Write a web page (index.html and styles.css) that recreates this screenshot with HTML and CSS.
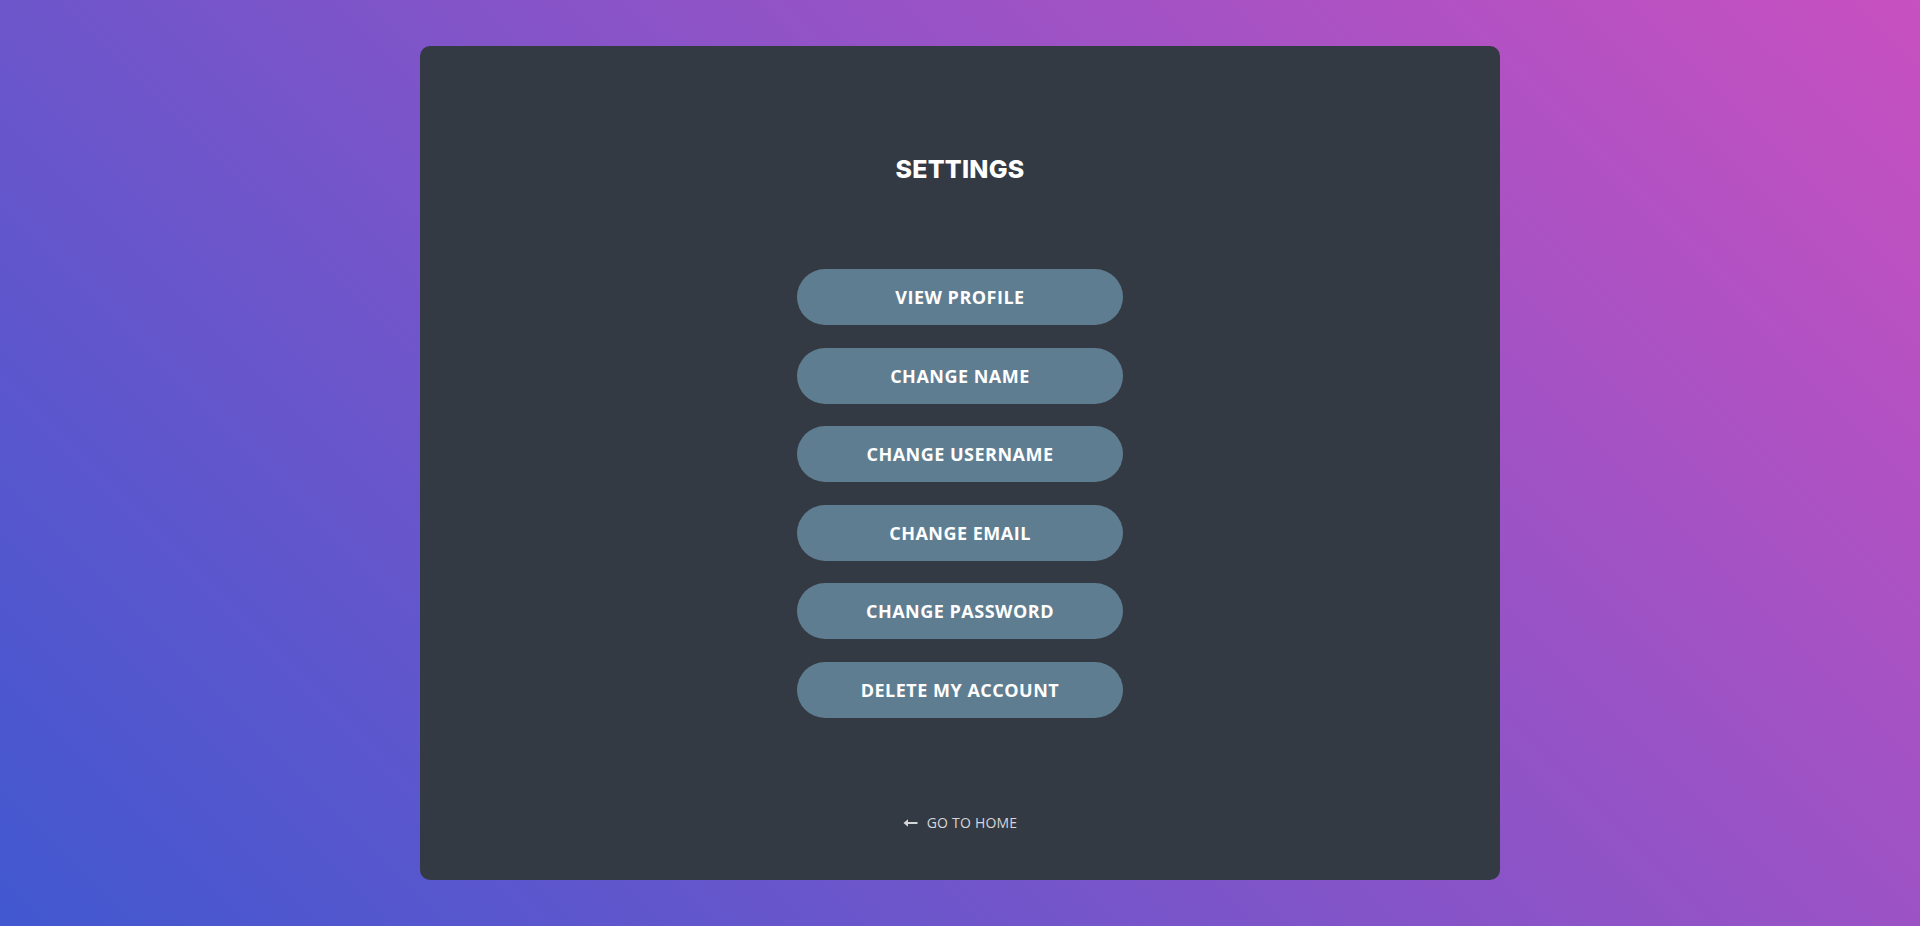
FILE: index.html
```html
<!DOCTYPE html>
<html lang="en">
<head>
<meta charset="utf-8">
<title>Settings</title>
<link rel="stylesheet" href="styles.css">
</head>
<body>
<main class="page">
  <section class="card">
    <h1 class="title">SETTINGS</h1>
    <nav class="menu">
      <button class="menu-btn">VIEW PROFILE</button>
      <button class="menu-btn">CHANGE NAME</button>
      <button class="menu-btn">CHANGE USERNAME</button>
      <button class="menu-btn">CHANGE EMAIL</button>
      <button class="menu-btn">CHANGE PASSWORD</button>
      <button class="menu-btn">DELETE MY ACCOUNT</button>
    </nav>
    <a class="home-link" href="#">
      <svg class="home-arrow" width="15" height="10" viewBox="0 0 15 10" aria-hidden="true">
        <path d="M14.5 5H2.5" stroke="#d4d6da" stroke-width="2" fill="none"/>
        <path d="M0.5 5L5 1.2V8.8Z" fill="#d4d6da"/>
      </svg>
      <span>GO TO HOME</span>
    </a>
  </section>
</main>
</body>
</html>
```
FILE: styles.css
```css
* { box-sizing: border-box; }
html, body { margin: 0; padding: 0; }
body {
  font-family: "Open Sans", "Liberation Sans", sans-serif;
  background: linear-gradient(45deg, #4158d0 0%, #c850c0 100%);
  height: 926px;
  overflow: hidden;
}
.page {
  display: flex;
  justify-content: center;
  padding-top: 46px;
  height: 926px;
}
.card {
  width: 1080px;
  height: 834px;
  background: #343a43;
  border-radius: 10px;
  display: flex;
  flex-direction: column;
  align-items: center;
  padding-top: 105px;
}
.title {
  margin: 0;
  font-family: "Inter", "Open Sans", sans-serif;
  font-weight: 800;
  font-size: 25px;
  line-height: 36px;
  color: #ffffff;
  letter-spacing: 0.2px;
}
.menu {
  margin-top: 82px;
  display: flex;
  flex-direction: column;
  gap: 22.6px;
}
.menu-btn {
  width: 326px;
  height: 56px;
  border: none;
  border-radius: 28px;
  background: #5f7d91;
  color: #ffffff;
  font-family: "Open Sans", "Liberation Sans", sans-serif;
  font-weight: 700;
  font-size: 18px;
  letter-spacing: 0.5px;
  cursor: pointer;
  padding: 0;
}
.home-link {
  margin-top: 95px;
  display: flex;
  align-items: center;
  gap: 9px;
  color: #d4d6da;
  text-decoration: none;
  font-family: "Open Sans", "Liberation Sans", sans-serif;
  font-size: 14px;
  line-height: 20px;
  letter-spacing: 0.2px;
}
.home-arrow { display: block; }
```
